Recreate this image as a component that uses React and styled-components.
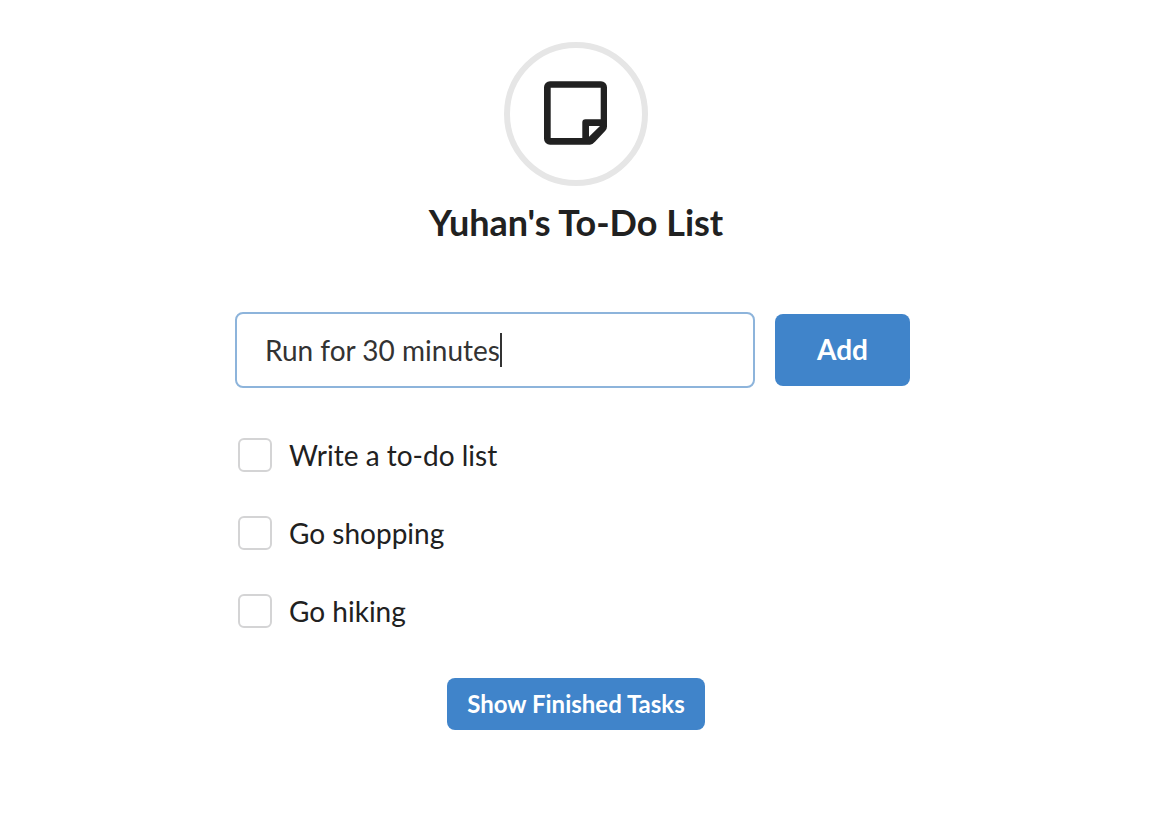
import React, { useState } from "react";
import styled, { createGlobalStyle } from "styled-components";

const GlobalStyle = createGlobalStyle`
  * { box-sizing: border-box; }
  body {
    margin: 0;
    background: #fff;
    color: #212121;
    font-family: Lato, "Liberation Sans", sans-serif;
    font-size: 28px;
    line-height: 36px;
  }
`;

const Page = styled.main`
  display: flex;
  flex-direction: column;
  align-items: center;
  padding: 42px 24px 42px 16px;
`;

const Badge = styled.div`
  display: flex;
  align-items: center;
  justify-content: center;
  width: 144px;
  height: 144px;
  padding-bottom: 2px;
  border: 6px solid #e6e6e6;
  border-radius: 50%;
`;

const Title = styled.h1`
  margin: 12px 0 66px;
  font-size: 36px;
  line-height: 48px;
  font-weight: 700;
`;

const Content = styled.div`
  width: 100%;
  max-width: 682px;
`;

const EntryForm = styled.form`
  display: flex;
  align-items: center;
  gap: 20px;
  padding-right: 7px;
`;

const Field = styled.label`
  display: flex;
  align-items: center;
  flex: 1;
  min-width: 0;
  height: 76px;
  padding: 0 28px;
  border: 2px solid #8db4db;
  border-radius: 8px;
  cursor: text;
`;

const TextInput = styled.input`
  field-sizing: content;
  min-width: 0;
  max-width: 100%;
  padding: 0;
  border: 0;
  outline: 0;
  background: transparent;
  color: #333;
  caret-color: transparent;
  font: inherit;
`;

const Caret = styled.span`
  flex: none;
  width: 2px;
  height: 34px;
  background: #333;
`;

const Button = styled.button`
  flex: none;
  padding: 0 20px 2px;
  border: 0;
  border-radius: 8px;
  background: #4084ca;
  color: #fff;
  font-family: inherit;
  font-weight: 700;
  cursor: pointer;
`;

const AddButton = styled(Button)`
  width: 135px;
  height: 72px;
  font-size: 28px;
`;

const ToggleButton = styled(Button)`
  height: 52px;
  font-size: 24px;
`;

const TaskList = styled.ul`
  display: grid;
  gap: 42px;
  margin: 49px 0;
  padding: 0 3px;
  list-style: none;
`;

const Task = styled.label`
  display: flex;
  align-items: center;
  gap: 17px;
  height: 36px;
`;

const Checkbox = styled.input`
  appearance: none;
  flex: none;
  width: 34px;
  height: 34px;
  margin: 0;
  border: 2px solid #d4d4d5;
  border-radius: 6px;
  background: #fff;
  &:checked { background: #4084ca; }
`;

const NoteIcon = () => (
  <svg width="64" height="64" viewBox="0 0 64 64" fill="#212121" aria-hidden="true">
    <path
      fillRule="evenodd"
      d="M6 .3H57A6 6 0 0 1 63 6.3V45.5Q63 48 61.3 49.8L51 60.8Q48.5 63.7 46 63.7H6A6 6 0 0 1 0 57.7V6.3A6 6 0 0 1 6 .3ZM6.7 6.7V57H38.3V41.5A3.2 3.2 0 0 1 41.5 38.3H56.7V6.7ZM45 45V55.8L56 45Z"
    />
  </svg>
);

const tasks = ["Write a to-do list", "Go shopping", "Go hiking"];

export default function App() {
  const [entry, setEntry] = useState("Run for 30 minutes");
  return (
    <>
      <GlobalStyle />
      <Page>
        <Badge><NoteIcon /></Badge>
        <Title>Yuhan's To-Do List</Title>
        <Content>
          <EntryForm onSubmit={(e) => e.preventDefault()}>
            <Field>
              <TextInput
                type="text"
                aria-label="New task"
                value={entry}
                onChange={(e) => setEntry(e.target.value)}
              />
              <Caret />
            </Field>
            <AddButton type="submit">Add</AddButton>
          </EntryForm>
          <TaskList>
            {tasks.map((task) => (
              <li key={task}>
                <Task><Checkbox type="checkbox" />{task}</Task>
              </li>
            ))}
          </TaskList>
        </Content>
        <ToggleButton type="button">Show Finished Tasks</ToggleButton>
      </Page>
    </>
  );
}
